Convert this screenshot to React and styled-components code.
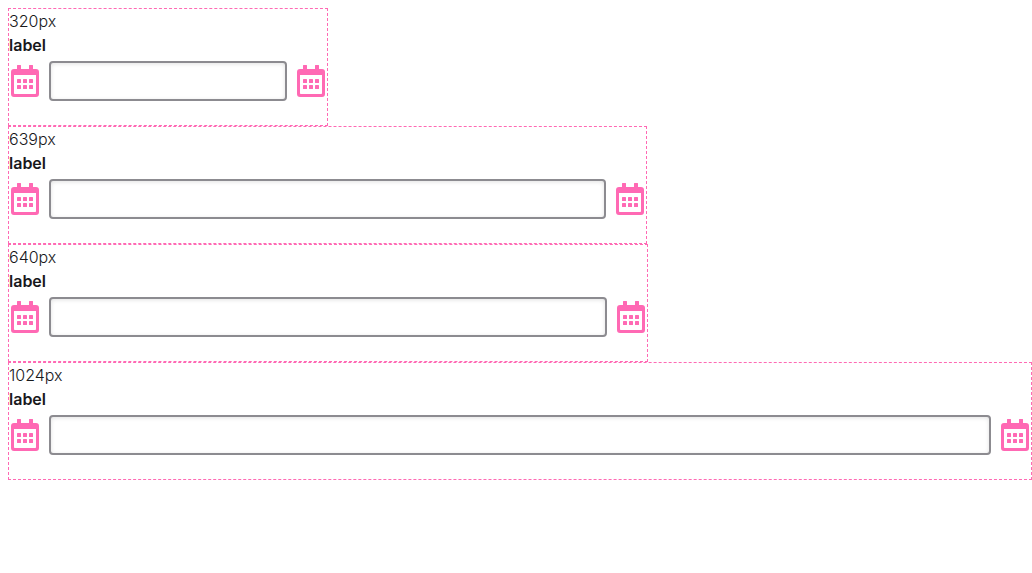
import React from "react";
import styled, { createGlobalStyle } from "styled-components";

const GlobalStyle = createGlobalStyle`
  *, *::before, *::after { box-sizing: border-box; }
  body {
    margin: 8px 0 0 8px;
    background: #fff;
    color: #18181b;
    font-family: Inter, "Liberation Sans", sans-serif;
    font-size: 16px;
    font-weight: 300;
    font-optical-sizing: none;
    line-height: 24px;
  }
`;

const Frame = styled.section`
  width: 100%;
  max-width: ${({ $width }) => $width}px;
  border: 1px dashed hotpink;
`;

const Field = styled.div`
  padding-bottom: 24px;
`;

const Label = styled.label`
  display: block;
  margin-bottom: 4px;
  font-weight: 600;
`;

const InputRow = styled.div`
  display: flex;
  align-items: center;
  gap: 8px;
`;

const TextInput = styled.input`
  flex: 1;
  min-width: 0;
  height: 40px;
  padding: 0 8px;
  border: 2px solid #8c8b90;
  border-radius: 4px;
  background: #fff;
  box-shadow: inset 0 1px 4px rgba(0, 0, 0, 0.12);
  color: inherit;
  font: inherit;
`;

const Icon = styled.svg`
  flex: none;
  width: 32px;
  height: 32px;
  fill: hotpink;
`;

function CalendarIcon() {
  return (
    <Icon viewBox="0 0 32 32" aria-hidden="true">
      <path
        fillRule="evenodd"
        d="M8.5 0h3a.5.5 0 0 1 .5.5V4h8V.5a.5.5 0 0 1 .5-.5h3a.5.5 0 0 1 .5.5V4h3a3 3 0 0 1 3 3v22a3 3 0 0 1-3 3H5a3 3 0 0 1-3-3V7a3 3 0 0 1 3-3h3V.5a.5.5 0 0 1 .5-.5zM5 10v18.25a.75.75 0 0 0 .75.75h20.5a.75.75 0 0 0 .75-.75V10z"
      />
      {[14, 20].map((y) =>
        [8, 14, 20].map((x) => (
          <rect key={`${x}-${y}`} x={x} y={y} width="4" height="4" rx="0.5" />
        ))
      )}
    </Icon>
  );
}

function Example({ width }) {
  const id = `input-${width}`;
  return (
    <Frame $width={width}>
      <div>{width}px</div>
      <Field>
        <Label htmlFor={id}>label</Label>
        <InputRow>
          <CalendarIcon />
          <TextInput id={id} type="text" />
          <CalendarIcon />
        </InputRow>
      </Field>
    </Frame>
  );
}

export default function App() {
  return (
    <>
      <GlobalStyle />
      <main>
        {[320, 639, 640, 1024].map((width) => (
          <Example key={width} width={width} />
        ))}
      </main>
    </>
  );
}
